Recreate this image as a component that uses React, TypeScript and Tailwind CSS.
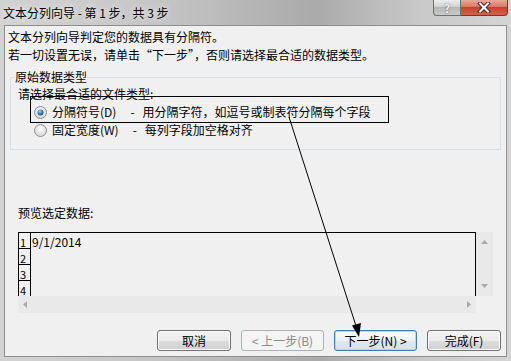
import React from 'react'

const FONT = "font-['Noto_Sans_CJK_SC','Liberation_Sans',sans-serif]"

function WinButton({ label, width, kind = 'normal' }: { label: string; width: string; kind?: 'normal' | 'default' | 'disabled' }) {
  const base = `h-[21px] ${width} rounded-[3px] border text-[12px] leading-[19px] flex items-center justify-center`
  if (kind === 'disabled') {
    return <div className={`${base} border-[#adb2b5] bg-[#f4f4f4] text-[#8a8a8a]`}>{label}</div>
  }
  if (kind === 'default') {
    return (
      <div className={`${base} border-[#3c7fb1] bg-[linear-gradient(#f6f9fb_0%,#eef2f5_50%,#e2e8ec_51%,#d9e0e5_100%)] shadow-[inset_0_0_0_1px_#a9dcf6] text-black`}>
        {label}
      </div>
    )
  }
  return (
    <div className={`${base} border-[#707070] bg-[linear-gradient(#f2f2f2_0%,#ebebeb_50%,#dddddd_51%,#cfcfcf_100%)] shadow-[inset_0_0_0_1px_#fbfbfb] text-black`}>
      {label}
    </div>
  )
}

function Radio({ checked }: { checked?: boolean }) {
  return (
    <svg width="13" height="13" viewBox="0 0 13 13" className="shrink-0">
      <defs>
        <radialGradient id={checked ? 'rc' : 'ru'} cx="50%" cy="40%" r="60%">
          <stop offset="0%" stopColor="#ffffff" />
          <stop offset="100%" stopColor="#d4d4d4" />
        </radialGradient>
        <radialGradient id="dot" cx="40%" cy="35%" r="70%">
          <stop offset="0%" stopColor="#a5d8f7" />
          <stop offset="60%" stopColor="#2f74b6" />
          <stop offset="100%" stopColor="#1b4e84" />
        </radialGradient>
      </defs>
      <circle cx="6.5" cy="6.5" r="6" fill={`url(#${checked ? 'rc' : 'ru'})`} stroke="#8f8f8f" />
      {checked && <circle cx="6.5" cy="6.5" r="3" fill="url(#dot)" />}
    </svg>
  )
}

function Option({ checked, name, desc }: { checked?: boolean; name: string; desc: string }) {
  return (
    <div className="flex items-center h-[18px] ml-[19px] gap-[5px] leading-[18px]">
      <Radio checked={checked} />
      <span>{name}</span>
      <span className="ml-[9px] mr-[3px]">-</span>
      <span>{desc}</span>
    </div>
  )
}

export default function App() {
  const rows = ['1', '2', '3', '4']
  return (
    <div className={`relative w-[511px] h-[361px] overflow-hidden bg-[linear-gradient(90deg,#d3d3d3_0%,#c6c6c6_30%,#aaaaaa_62%,#c9c9c9_82%,#d4d4d4_100%)] ${FONT} text-[12px] text-black`}>
      {/* title bar */}
      <div className="h-[25px] flex items-start">
        <div className="pl-[3px] pt-[4px] leading-[18px] text-[12px] text-black whitespace-pre [text-shadow:0_0_6px_#ffffff]">
          文本分列向导 - 第 1 步，共 3 步
        </div>
        <div className="ml-auto mr-[3px] flex">
          <div className="w-[28px] h-[16px] border border-t-0 border-[#6f6f6f] rounded-bl-[4px] bg-[linear-gradient(#eeeeee_0%,#d2d2d2_45%,#b6b6b6_50%,#c9c9c9_100%)] flex items-center justify-center text-[11px] leading-[14px] font-bold text-[#f4f4f4] [text-shadow:0_0_2px_#555]">
            ?
          </div>
          <div className="w-[47px] h-[16px] border border-t-0 border-l-0 border-[#6d3a32] rounded-br-[4px] bg-[linear-gradient(#eaa99a_0%,#d97863_45%,#c6432c_50%,#d4614a_100%)] flex items-center justify-center">
            <svg width="14" height="11" viewBox="0 0 14 11">
              <path d="M3 1.5 L11 9.5 M11 1.5 L3 9.5" stroke="#4a2520" strokeWidth="4" strokeLinecap="square" />
              <path d="M3 1.5 L11 9.5 M11 1.5 L3 9.5" stroke="#ffffff" strokeWidth="2" strokeLinecap="square" />
            </svg>
          </div>
        </div>
      </div>

      {/* client area */}
      <div className="mx-[4px] h-[332px] border border-[#8e8e8e] bg-[#f0f0f0]">
        <div className="pl-[3px] pt-[2px] leading-[18px]">
          <div>文本分列向导判定您的数据具有分隔符。</div>
          <div>若一切设置无误，请单击“下一步”，否则请选择最合适的数据类型。</div>
        </div>

        <fieldset className="mt-[5px] mx-[5px] border border-[#d5dfe5] px-[4px] pb-[10px]">
          <legend className="leading-[16px] px-0">原始数据类型</legend>
          <div className="ml-[3px] leading-[18px]">请选择最合适的文件类型:</div>
          <Option checked name="分隔符号(D)" desc="用分隔字符，如逗号或制表符分隔每个字段" />
          <Option name="固定宽度(W)" desc="每列字段加空格对齐" />
        </fieldset>

        <div className="mt-[54px] ml-[13px] leading-[18px]">预览选定数据:</div>

        {/* preview */}
        <div className="mt-[10px] ml-[13px] w-[475px] flex">
          <div className="w-[458px] flex flex-col">
            <div className="h-[64px] flex border-t border-r border-black bg-[#f0f0f0] overflow-hidden">
              <div className="w-[13px] border-l border-r border-black flex flex-col">
                {rows.map(r => (
                  <div key={r} className="h-[16px] shrink-0 border-b border-black text-[11px] leading-[13px] pt-[3px] pl-[1px] overflow-hidden">
                    {r}
                  </div>
                ))}
              </div>
              <div className="pl-[1px] pt-[1px] text-[12px] leading-[16px]">9/1/2014</div>
            </div>
            <div className="h-[17px] bg-[#e9e9e9] flex items-center justify-between px-[5px]">
              <svg width="4" height="7" viewBox="0 0 4 7"><path d="M4 0 L0 3.5 L4 7 Z" fill="#a9a9a9" /></svg>
              <svg width="4" height="7" viewBox="0 0 4 7"><path d="M0 0 L4 3.5 L0 7 Z" fill="#a9a9a9" /></svg>
            </div>
          </div>
          <div className="w-[17px] flex flex-col">
            <div className="h-[64px] bg-[#e9e9e9] flex flex-col items-center justify-between py-[8px]">
              <svg width="7" height="4" viewBox="0 0 7 4"><path d="M0 4 L3.5 0 L7 4 Z" fill="#a9a9a9" /></svg>
              <svg width="7" height="4" viewBox="0 0 7 4"><path d="M0 0 L3.5 4 L7 0 Z" fill="#a9a9a9" /></svg>
            </div>
            <div className="h-[17px] bg-[#f0f0f0]" />
          </div>
        </div>

        {/* buttons */}
        <div className="mt-[17px] pr-[5px] flex justify-end gap-[10px]">
          <WinButton label="取消" width="w-[74px]" />
          <WinButton label="< 上一步(B)" width="w-[83px]" kind="disabled" />
          <WinButton label="下一步(N) >" width="w-[83px]" kind="default" />
          <WinButton label="完成(F)" width="w-[74px]" />
        </div>
      </div>

      {/* annotation overlay */}
      <svg className="absolute inset-0 pointer-events-none" width="511" height="361" viewBox="0 0 511 361">
        <rect x="30.5" y="96.5" width="358" height="26" fill="none" stroke="#000" strokeWidth="1" />
        <line x1="289" y1="117" x2="356" y2="326" stroke="#000" strokeWidth="1" />
        <polygon points="359,337 352,325.5 361,323" fill="#000" />
      </svg>
    </div>
  )
}
